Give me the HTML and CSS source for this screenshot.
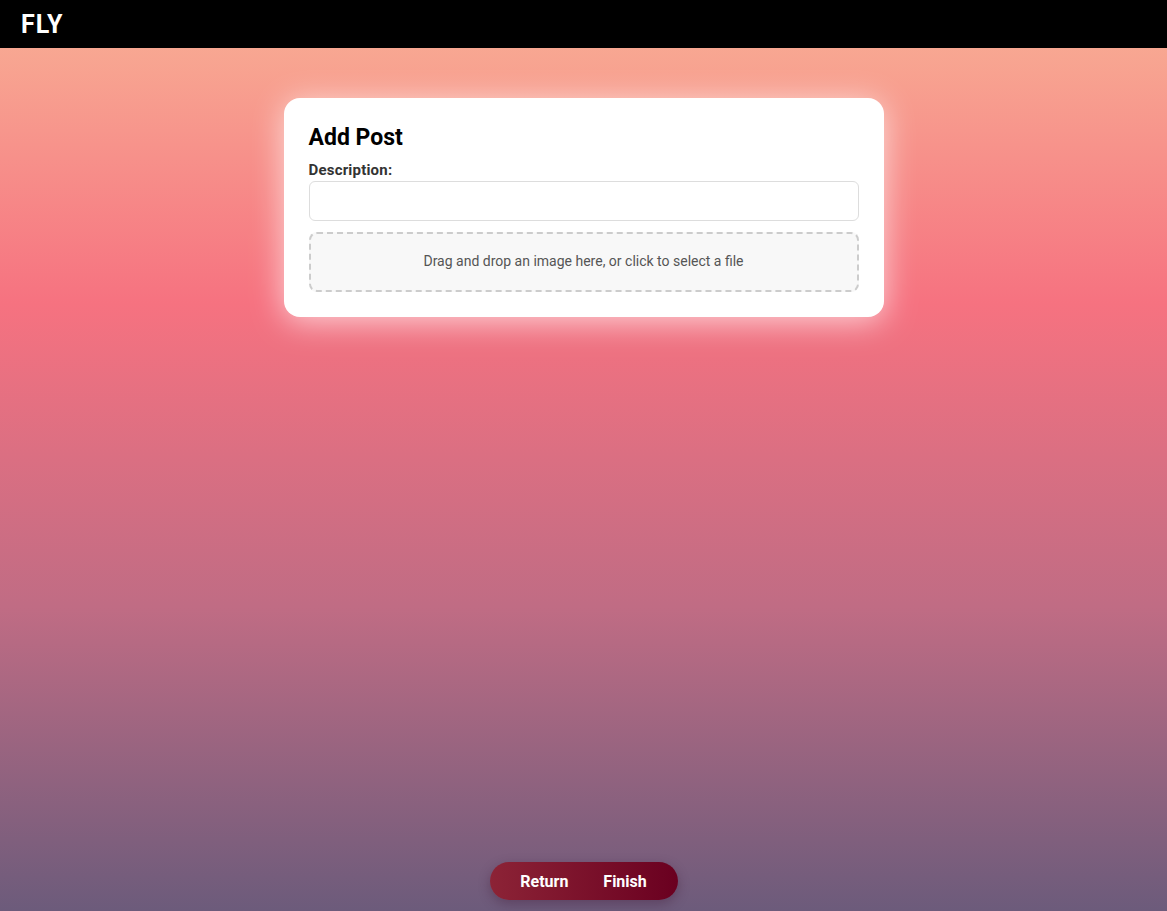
FILE: index.html
```html
<!DOCTYPE html>
<html lang="en">
<head>
<meta charset="utf-8">
<title>FLY - Add Post</title>
<link rel="stylesheet" href="styles.css">
</head>
<body>
<header class="topbar"><span class="logo">FLY</span></header>
<main class="main">
  <section class="card">
    <h2 class="card-title">Add Post</h2>
    <label class="field-label" for="desc">Description:</label>
    <input class="field-input" id="desc" type="text">
    <div class="dropzone">Drag and drop an image here, or click to select a file</div>
  </section>
  <nav class="actions">
    <button class="action">Return</button>
    <button class="action">Finish</button>
  </nav>
</main>
</body>
</html>
```
FILE: styles.css
```css
* { box-sizing: border-box; }
html, body { margin: 0; height: 100%; }
body {
  font-family: "Roboto", "Liberation Sans", sans-serif;
  background: linear-gradient(to bottom, #F8B195 0%, #F67280 33.3%, #C06C84 66.6%, #6C5B7B 100%);
  min-height: 911px;
  display: flex;
  flex-direction: column;
}
.topbar {
  height: 48px;
  background: #000;
  display: flex;
  align-items: center;
  padding-left: 21px;
  flex-shrink: 0;
}
.logo {
  color: #fff;
  font-weight: 700;
  font-size: 25px;
  letter-spacing: 1px;
}
.main {
  flex: 1;
  display: flex;
  flex-direction: column;
  align-items: center;
  padding-top: 50px;
  padding-bottom: 11px;
}
.card {
  width: 600px;
  background: #fff;
  border-radius: 16px;
  padding: 24px 25px 25px;
  box-shadow: 0 4px 32px rgba(255, 255, 255, 0.7);
  display: flex;
  flex-direction: column;
}
.card-title {
  margin: 0 0 7px;
  font-size: 23px;
  font-weight: 700;
  color: #000;
  line-height: 32px;
}
.field-label {
  font-size: 15px;
  font-weight: 700;
  color: #333;
  line-height: 18px;
  letter-spacing: 0.2px;
  margin-bottom: 2px;
}
.field-input {
  height: 40px;
  border: 1px solid #ddd;
  border-radius: 6px;
  background: #fff;
  font: inherit;
  margin-bottom: 11px;
}
.dropzone {
  height: 60px;
  border: 2px dashed #ccc;
  border-radius: 8px;
  background: #f8f8f8;
  color: #555;
  font-size: 14px;
  padding-bottom: 3px;
  display: flex;
  align-items: center;
  justify-content: center;
}
.actions {
  margin-top: auto;
  width: 188px;
  height: 38px;
  border-radius: 19px;
  background: linear-gradient(to right, #8c2336, #6a0020);
  box-shadow: 0 4px 12px rgba(60, 20, 50, 0.35);
  display: flex;
  align-items: center;
  justify-content: center;
  gap: 35px;
}
.action {
  background: none;
  border: none;
  padding: 0;
  color: #fff;
  font-family: inherit;
  font-size: 16px;
  font-weight: 700;
  cursor: pointer;
}
```
